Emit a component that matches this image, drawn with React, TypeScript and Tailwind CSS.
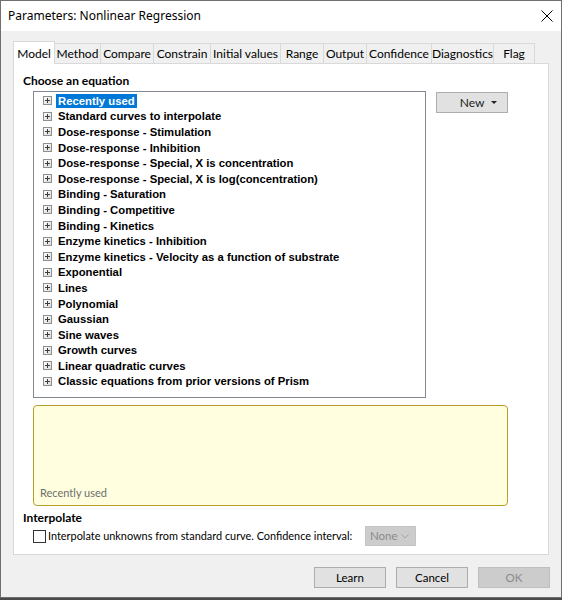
import { useState } from "react";

const UI_FONT = "font-['Lato','Liberation_Sans',sans-serif]";

const tabs = [
  { label: "Model", w: "w-[42px]" },
  { label: "Method", w: "w-[46px]" },
  { label: "Compare", w: "w-[53px]" },
  { label: "Constrain", w: "w-[57px]" },
  { label: "Initial values", w: "w-[70px]" },
  { label: "Range", w: "w-[43px]" },
  { label: "Output", w: "w-[43px]" },
  { label: "Confidence", w: "w-[65px]" },
  { label: "Diagnostics", w: "w-[62px]" },
  { label: "Flag", w: "w-[41px]" },
];

const equations = [
  "Recently used",
  "Standard curves to interpolate",
  "Dose-response - Stimulation",
  "Dose-response - Inhibition",
  "Dose-response - Special, X is concentration",
  "Dose-response - Special, X is log(concentration)",
  "Binding - Saturation",
  "Binding - Competitive",
  "Binding - Kinetics",
  "Enzyme kinetics - Inhibition",
  "Enzyme kinetics - Velocity as a function of substrate",
  "Exponential",
  "Lines",
  "Polynomial",
  "Gaussian",
  "Sine waves",
  "Growth curves",
  "Linear quadratic curves",
  "Classic equations from prior versions of Prism",
];

function PlusBox() {
  return (
    <svg width="9" height="9" viewBox="0 0 9 9" className="shrink-0">
      <defs>
        <linearGradient id="pb" x1="0" y1="0" x2="1" y2="1">
          <stop offset="0" stopColor="#ffffff" />
          <stop offset="1" stopColor="#d8d8d8" />
        </linearGradient>
      </defs>
      <rect x="0.5" y="0.5" width="8" height="8" fill="url(#pb)" stroke="#8e8f8f" />
      <path d="M2 4.5h5M4.5 2v5" stroke="#3c3c3c" strokeWidth="1" />
    </svg>
  );
}

function DialogButton({ label, disabled }: { label: string; disabled?: boolean }) {
  return (
    <button
      className={
        disabled
          ? "w-[72px] h-[21px] border border-[#bfbfbf] bg-[#cccccc] text-[11.5px] text-[#8a8a8a]"
          : "w-[72px] h-[21px] border border-[#adadad] bg-[#e1e1e1] text-[11.5px] text-black"
      }
    >
      {label}
    </button>
  );
}

export default function App() {
  const [selected, setSelected] = useState(0);
  const [interp, setInterp] = useState(false);

  return (
    <div className={`w-[562px] h-[600px] bg-[#4a4a4a] ${UI_FONT}`}>
      <div className="w-[562px] h-[598px] border border-[#6f6f6f] bg-[#f0f0f0] flex flex-col">
        {/* title bar */}
        <div className="h-[30px] bg-white flex items-center justify-between pl-[7px] pr-[8px] shrink-0">
          <span className="font-['Noto_Sans',sans-serif] text-[12px] text-black">
            Parameters: Nonlinear Regression
          </span>
          <svg width="12" height="12" viewBox="0 0 12 12">
            <path d="M0.5 0.5l11 11M11.5 0.5l-11 11" stroke="#000" strokeWidth="1" />
          </svg>
        </div>

        {/* tab strip */}
        <div className="mt-[10px] px-[12px] flex items-end h-[22px] relative z-10">
          {tabs.map((t, i) =>
            i === 0 ? (
              <div
                key={t.label}
                className={`${t.w} h-[23px] -mb-px bg-white border border-b-0 border-[#d9d9d9] flex items-start justify-center pt-[3px] text-[12px] text-black whitespace-nowrap`}
              >
                {t.label}
              </div>
            ) : (
              <div
                key={t.label}
                className={`${t.w} h-[20px] border-t border-r border-[#d9d9d9] bg-[#f0f0f0] flex items-center justify-center text-[12px] text-black whitespace-nowrap`}
              >
                {t.label}
              </div>
            )
          )}
        </div>

        {/* model page */}
        <div className="mx-[12px] h-[492px] bg-white border border-[#d9d9d9] pl-[9px] pt-[9px]">
          <div className="text-[12px] font-bold text-black leading-[16px]">Choose an equation</div>

          <div className="flex items-start mt-[2px] pl-[10px]">
            <div className="w-[393px] h-[307px] border border-[#828790] bg-white pt-[1px] pl-[9px] font-['Liberation_Sans',Arial,sans-serif] font-bold text-[11.3px] text-black">
              {equations.map((eq, i) => (
                <div
                  key={eq}
                  className="h-[15.6px] flex items-center cursor-default"
                  onClick={() => setSelected(i)}
                >
                  <PlusBox />
                  <span
                    className={
                      i === selected
                        ? "ml-[4px] px-[2px] h-[14px] leading-[14px] bg-[#0078d7] text-white"
                        : "ml-[4px] px-[2px] h-[14px] leading-[14px]"
                    }
                  >
                    {eq}
                  </span>
                </div>
              ))}
            </div>

            <button className="ml-[10px] mt-[1px] w-[72px] h-[21px] border border-[#adadad] bg-[#e1e1e1] text-[12px] text-[#222] relative">
              New
              <svg width="6" height="3" viewBox="0 0 6 3" className="absolute right-[10px] top-[8px]">
                <path d="M0 0h6L3 3z" fill="#222" />
              </svg>
            </button>
          </div>

          {/* description box */}
          <div className="ml-[10px] mt-[7px] w-[475px] h-[101px] rounded-[4px] border border-[#b99f2a] bg-[#ffffe0] flex items-end px-[6px] pb-[4px]">
            <span className="text-[11px] text-[#6d6d6d]">Recently used</span>
          </div>

          <div className="mt-[4px] text-[12px] font-bold text-black leading-[16px]">Interpolate</div>
          <div className="flex items-center pl-[10px] h-[20px]">
            <div
              className="w-[13px] h-[13px] border border-[#333333] bg-white shrink-0"
              onClick={() => setInterp(!interp)}
            >
              {interp && (
                <svg width="11" height="11" viewBox="0 0 11 11">
                  <path d="M2 5.5l2.5 2.5 4.5-5" stroke="#000" fill="none" />
                </svg>
              )}
            </div>
            <span className="ml-[2px] text-[10.9px] text-black whitespace-nowrap">
              Interpolate unknowns from standard curve. Confidence interval:
            </span>
            <div className="ml-auto mr-[132px] w-[51px] h-[20px] bg-[#cccccc] border border-[#c4c4c4] flex items-center justify-between pl-[4px] pr-[6px] text-[11.5px] text-[#8a8a8a]">
              <span>None</span>
              <svg width="8" height="5" viewBox="0 0 8 5">
                <path d="M0.5 0.5L4 4l3.5-3.5" stroke="#a3a3a3" fill="none" />
              </svg>
            </div>
          </div>
        </div>

        {/* dialog buttons */}
        <div className="mt-[12px] px-[11px] flex justify-end gap-[10px]">
          <DialogButton label="Learn" />
          <DialogButton label="Cancel" />
          <DialogButton label="OK" disabled />
        </div>
      </div>
    </div>
  );
}
